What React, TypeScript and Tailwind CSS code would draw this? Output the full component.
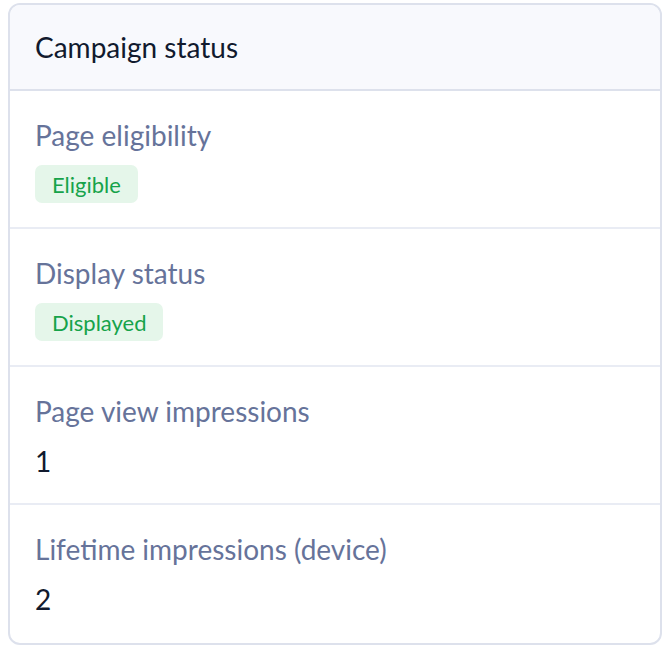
const rows: { label: string; badge?: string; value?: string }[] = [
  { label: 'Page eligibility', badge: 'Eligible' },
  { label: 'Display status', badge: 'Displayed' },
  { label: 'Page view impressions', value: '1' },
  { label: 'Lifetime impressions (device)', value: '2' },
];

export default function App() {
  return (
    <div className="min-h-screen bg-white pt-[3px] px-2 font-['Lato',sans-serif]">
      <div className="w-[654px] overflow-hidden rounded-[12px] border-2 border-[#dde1ec] bg-white">
        {/* Header */}
        <div className="flex h-[86px] items-center border-b-2 border-[#dde1ec] bg-[#f8f9fd] px-[25px]">
          <h2 className="text-[28px] leading-[36px] text-[#111a2e]">Campaign status</h2>
        </div>

        {rows.map((row, idx) => (
          <div
            key={row.label}
            className={`flex h-[138px] flex-col px-[25px] pt-[26px] ${idx < rows.length - 1 ? 'border-b-2 border-[#e9ecf4]' : ''}`}
          >
            <span className="text-[28px] leading-[36px] text-[#66739a]">{row.label}</span>
            {row.badge ? (
              <span className="mt-3 inline-flex h-[38px] w-fit items-center rounded-[7px] bg-[#e5f6ea] px-[17px] text-[22px] text-[#16a34a]">
                {row.badge}
              </span>
            ) : (
              <span className="mt-[14px] text-[28px] leading-[36px] text-[#111a2e]">{row.value}</span>
            )}
          </div>
        ))}
      </div>
    </div>
  );
}
